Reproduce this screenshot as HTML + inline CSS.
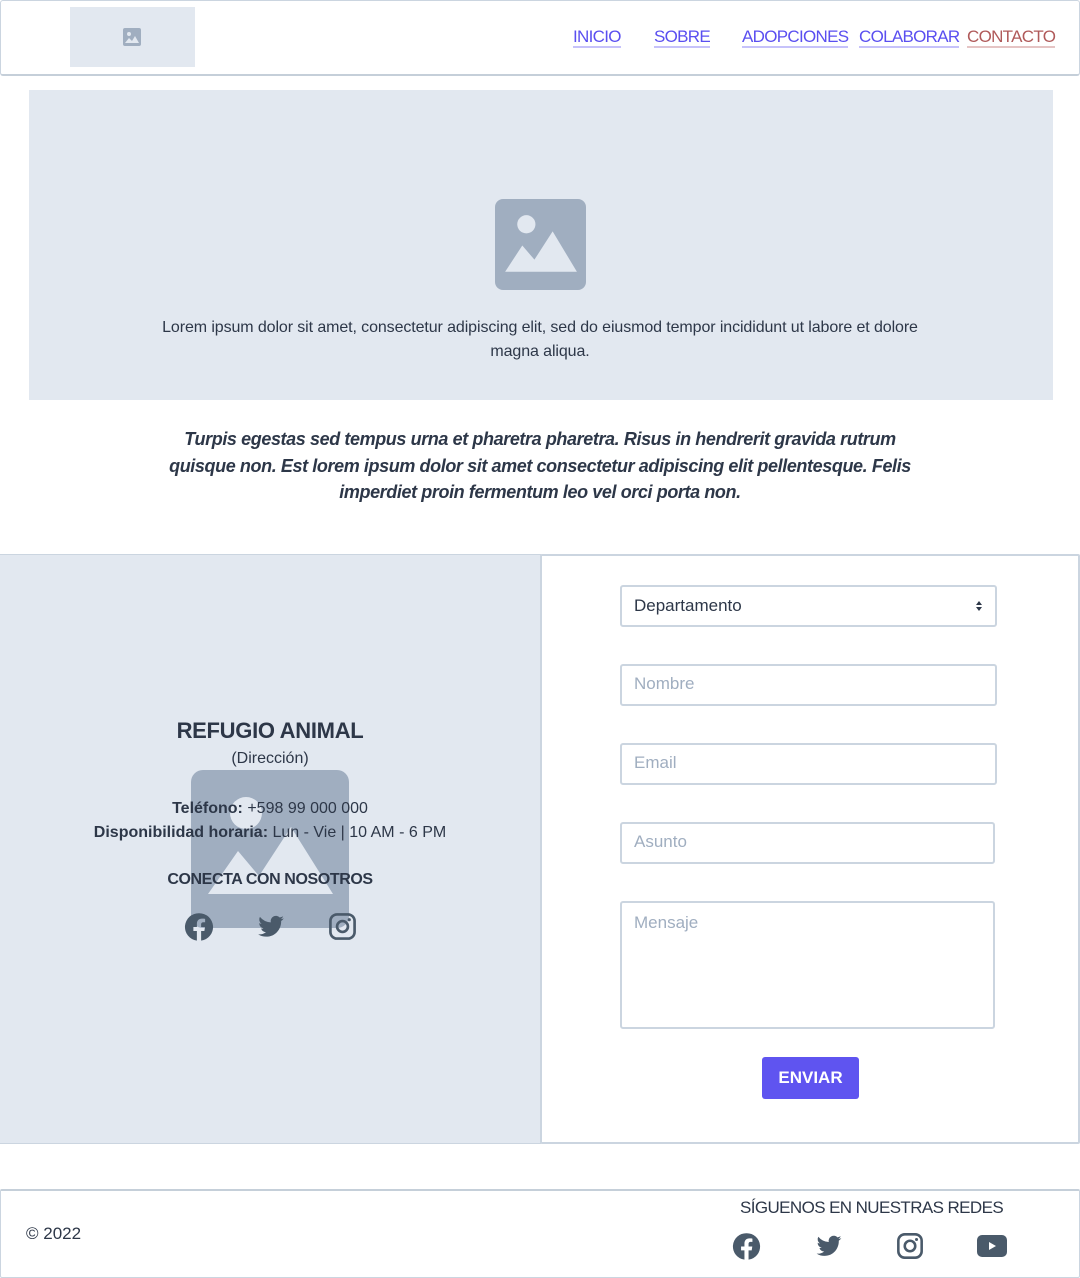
<!DOCTYPE html>
<html><head><meta charset="utf-8"><style>
*{box-sizing:border-box;margin:0;padding:0}
body{width:1080px;height:1278px;position:relative;background:#fff;font-family:"Liberation Sans",sans-serif;color:#2d3748;overflow:hidden}
.a{position:absolute}
.nav a{position:absolute;top:27px;font-size:17px;text-decoration:none;color:#5a4ff0;border-bottom:2px solid #c6c2fa;line-height:19px;letter-spacing:-0.7px}
.c{text-align:center}
.in{position:absolute;border:2px solid #cbd5e0;border-radius:3px;background:#fff;font-size:17px;color:#a0aec0;padding-left:12px;line-height:36px}
svg{display:block}
</style></head><body>
<div class="a" style="left:0;top:0;width:1080px;height:76px;border:1px solid #cbd5e0;border-bottom:2px solid #c5cfd9;border-radius:3px"></div>
<div class="a" style="left:70px;top:7px;width:125px;height:60px;background:#e2e8f0"></div>
<svg class="a" style="left:123px;top:28px" width="18" height="18" viewBox="0 0 18 18"><rect width="18" height="18" rx="2" fill="#a0aec0"/><circle cx="6" cy="6" r="2" fill="#e2e8f0"/><path d="M2 15l4-5 3 3 3-5 4 7z" fill="#e2e8f0"/></svg>
<div class="nav">
<a style="left:573px">INICIO</a><a style="left:654px">SOBRE</a><a style="left:742px">ADOPCIONES</a><a style="left:859px">COLABORAR</a><a style="left:967px;color:#b05a5a;border-color:#e5c4c4">CONTACTO</a>
</div>
<div class="a" style="left:29px;top:90px;width:1024px;height:310px;background:#e2e8f0"></div>
<svg class="a" style="left:495px;top:199px" width="91" height="91" viewBox="0 0 90 90"><rect width="90" height="90" rx="8" fill="#a0aec0"/><circle cx="31" cy="25" r="9" fill="#e2e8f0"/><path d="M10 72l17-26 12 14 18-28 24 40z" fill="#e2e8f0"/></svg>
<div class="a c" style="left:140px;top:316px;width:800px;font-size:16px;line-height:24px;color:#2d3748;letter-spacing:-0.1px">Lorem ipsum dolor sit amet, consectetur adipiscing elit, sed do eiusmod tempor incididunt ut labore et dolore magna aliqua.</div>
<div class="a c" style="left:150px;top:426px;width:780px;font-size:18px;line-height:26.5px;font-style:italic;font-weight:bold;color:#2d3748;letter-spacing:-0.4px">Turpis egestas sed tempus urna et pharetra pharetra. Risus in hendrerit gravida rutrum quisque non. Est lorem ipsum dolor sit amet consectetur adipiscing elit pellentesque. Felis imperdiet proin fermentum leo vel orci porta non.</div>
<div class="a" style="left:0;top:554px;width:541px;height:590px;background:#e2e8f0;border-top:1px solid #cbd5e0;border-bottom:1px solid #cbd5e0"></div>
<div class="a" style="left:540px;top:554px;width:540px;height:590px;border:2px solid #cbd5e0;border-radius:2px"></div>
<svg class="a" style="left:191px;top:770px" width="158" height="158" viewBox="0 0 158 158"><rect width="158" height="158" rx="12" fill="#a0aec0"/><circle cx="55" cy="43" r="16" fill="#e2e8f0"/><path d="M17 124l30-43 21 25 32-49 42 67z" fill="#e2e8f0"/></svg>
<div class="a c" style="left:0;top:718px;width:540px;font-size:22px;font-weight:bold;color:#2d3748;letter-spacing:-0.3px">REFUGIO ANIMAL</div>
<div class="a c" style="left:0;top:750px;width:540px;font-size:16px">(Dirección)</div>
<div class="a c" style="left:0;top:797px;width:540px;font-size:16px;line-height:24px"><b>Teléfono:</b> +598 99 000 000<br><b>Disponibilidad horaria:</b> Lun - Vie | 10 AM - 6 PM</div>
<div class="a c" style="left:0;top:871px;width:540px;font-size:16px;font-weight:bold;letter-spacing:-0.4px">CONECTA CON NOSOTROS</div>
<svg class="a" style="left:184px;top:912px" width="30" height="30" viewBox="0 0 24 24"><path fill="#4a5a6a" d="M12 1a11 11 0 0 0-1.7 21.9v-7.7H7.5V12h2.8V9.6c0-2.8 1.6-4.3 4.1-4.3 1.2 0 2.5.2 2.5.2v2.7h-1.4c-1.4 0-1.8.9-1.8 1.8V12h3.1l-.5 3.2h-2.6v7.7A11 11 0 0 0 12 1z"/></svg>
<svg class="a" style="left:256px;top:913px" width="30" height="28" viewBox="0 0 24 24"><path fill="#4a5a6a" d="M23 4.6a9 9 0 0 1-2.6.7 4.5 4.5 0 0 0 2-2.5 9 9 0 0 1-2.9 1.1A4.5 4.5 0 0 0 11.8 8 12.8 12.8 0 0 1 2.5 3.3a4.5 4.5 0 0 0 1.4 6 4.5 4.5 0 0 1-2-.6 4.5 4.5 0 0 0 3.6 4.5 4.5 4.5 0 0 1-2 .1 4.5 4.5 0 0 0 4.2 3.1A9 9 0 0 1 1 18.3 12.8 12.8 0 0 0 7.9 20.3c8.3 0 12.8-6.9 12.8-12.8v-.6A9 9 0 0 0 23 4.6z"/></svg>
<svg class="a" style="left:328px;top:912px" width="29" height="29" viewBox="0 0 24 24"><rect x="2" y="2" width="20" height="20" rx="5.5" fill="none" stroke="#4a5a6a" stroke-width="2.2"/><circle cx="12" cy="12" r="4.5" fill="none" stroke="#4a5a6a" stroke-width="2.2"/><circle cx="17.6" cy="6.4" r="1.3" fill="#4a5a6a"/></svg>
<div class="in" style="left:620px;top:585px;width:377px;height:42px;color:#2d3748;line-height:38px">Departamento<svg class="a" style="right:13px;top:14px" width="6" height="10" viewBox="0 0 6 10"><path d="M0 4L3 0L6 4zM0 6L3 10L6 6z" fill="#2d3748"/></svg></div>
<div class="in" style="left:620px;top:664px;width:377px;height:42px">Nombre</div>
<div class="in" style="left:620px;top:743px;width:377px;height:42px">Email</div>
<div class="in" style="left:620px;top:822px;width:375px;height:42px">Asunto</div>
<div class="in" style="left:620px;top:901px;width:375px;height:128px;line-height:40px">Mensaje</div>
<div class="a c" style="left:762px;top:1057px;width:97px;height:42px;background:#5f54f0;border-radius:3px;color:#fff;font-weight:bold;font-size:17px;line-height:42px">ENVIAR</div>
<div class="a" style="left:0;top:1189px;width:1080px;height:89px;border:1px solid #cbd5e0;border-top:2px solid #c5cfd9;border-radius:2px"></div>
<div class="a" style="left:26px;top:1224px;font-size:17px">© 2022</div>
<div class="a" style="left:740px;top:1198px;font-size:17px;letter-spacing:-0.6px">SÍGUENOS EN NUESTRAS REDES</div>
<svg class="a" style="left:732px;top:1232px" width="29" height="29" viewBox="0 0 24 24"><path fill="#4a5a6a" d="M12 1a11 11 0 0 0-1.7 21.9v-7.7H7.5V12h2.8V9.6c0-2.8 1.6-4.3 4.1-4.3 1.2 0 2.5.2 2.5.2v2.7h-1.4c-1.4 0-1.8.9-1.8 1.8V12h3.1l-.5 3.2h-2.6v7.7A11 11 0 0 0 12 1z"/></svg>
<svg class="a" style="left:814px;top:1233px" width="30" height="27" viewBox="0 0 24 24"><path fill="#4a5a6a" d="M23 4.6a9 9 0 0 1-2.6.7 4.5 4.5 0 0 0 2-2.5 9 9 0 0 1-2.9 1.1A4.5 4.5 0 0 0 11.8 8 12.8 12.8 0 0 1 2.5 3.3a4.5 4.5 0 0 0 1.4 6 4.5 4.5 0 0 1-2-.6 4.5 4.5 0 0 0 3.6 4.5 4.5 4.5 0 0 1-2 .1 4.5 4.5 0 0 0 4.2 3.1A9 9 0 0 1 1 18.3 12.8 12.8 0 0 0 7.9 20.3c8.3 0 12.8-6.9 12.8-12.8v-.6A9 9 0 0 0 23 4.6z"/></svg>
<svg class="a" style="left:896px;top:1232px" width="28" height="28" viewBox="0 0 24 24"><rect x="2" y="2" width="20" height="20" rx="5.5" fill="none" stroke="#4a5a6a" stroke-width="2.2"/><circle cx="12" cy="12" r="4.5" fill="none" stroke="#4a5a6a" stroke-width="2.2"/><circle cx="17.6" cy="6.4" r="1.3" fill="#4a5a6a"/></svg>
<svg class="a" style="left:977px;top:1235px" width="30" height="22" viewBox="0 0 30 22"><rect width="30" height="22" rx="5" fill="#4a5a6a"/><path d="M12 7v8l7-4z" fill="#fff"/></svg>
</body></html>
